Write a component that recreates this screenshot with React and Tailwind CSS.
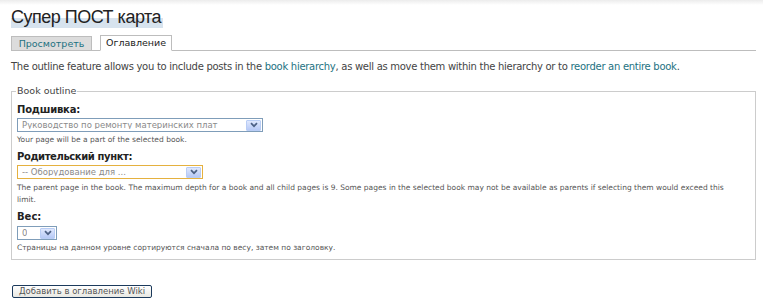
const font = { fontFamily: '"DejaVu Sans", Verdana, sans-serif' };

function Select({ width, value, focused }) {
  return (
    <div
      className={`flex h-[14px] items-center justify-between border bg-white pl-[4px] pr-[1px] ${
        focused ? "border-[#e5b13f]" : "border-[#7f9db9]"
      }`}
      style={{ width }}
    >
      <span className="truncate text-[8.5px] leading-none text-[#8a8a8a]">{value}</span>
      <span className="flex h-[11px] w-[15px] shrink-0 items-center justify-center rounded-[1px] border border-[#b9cdf5] bg-gradient-to-b from-[#dfe8fd] to-[#b7c9f6]">
        <svg width="8" height="6" viewBox="0 0 8 6">
          <path d="M1 1.2 L4 4.2 L7 1.2" fill="none" stroke="#4d6185" strokeWidth="1.7" />
        </svg>
      </span>
    </div>
  );
}

export default function App() {
  return (
    <div
      className="h-[308px] w-[763px] bg-gradient-to-b from-[#ececec] via-white to-white bg-[length:100%_10px] bg-no-repeat pl-[11px] pr-[7px] text-[#444]"
      style={font}
    >
      <div className="pt-[6px]">
        <h1
          className="inline-block bg-gradient-to-b from-transparent from-[55%] to-[#d7e3ee] to-[55%] pr-[2px] text-[18px] leading-[22px] tracking-[-0.5px] text-[#222]"
          style={{ fontFamily: '"Liberation Sans", Arial, sans-serif' }}
        >
          Супер ПОСТ карта
        </h1>
      </div>

      <div className="mt-[5px] flex items-end gap-[8px] border-b border-[#bdbdbd]">
        <span className="mb-[-1px] flex h-[15px] w-[81px] items-center justify-center border border-[#bdbdbd] bg-[#dcdcdc] pt-[1px] text-[9.5px] text-[#1d7282]">
          Просмотреть
        </span>
        <span className="mb-[-1px] flex h-[16px] w-[72px] items-center justify-center border border-b-white border-[#bdbdbd] bg-white pt-[1px] text-[9.5px] text-[#222]">
          Оглавление
        </span>
      </div>

      <p className="mt-[10px] text-[10px] leading-[12px] tracking-[-0.28px] text-[#444]">
        The outline feature allows you to include posts in the{" "}
        <span className="text-[#1d7282]">book hierarchy</span>, as well as move them within the
        hierarchy or to <span className="text-[#1d7282]">reorder an entire book</span>.
      </p>

      <fieldset className="mt-[13px] h-[174px] border border-[#cccccc] pl-[5px] pr-[6px]">
        <legend className="ml-[-1px] px-[1px] text-[9.5px] leading-[10px] text-[#444]">
          Book outline
        </legend>

        <div className="mt-[8px] text-[10px] font-bold leading-[12px] tracking-[-0.2px] text-[#222]">
          Подшивка:
        </div>
        <div className="mt-[2px]">
          <Select width={246} value="Руководство по ремонту материнских плат" />
        </div>
        <div className="mt-[2px] text-[7.5px] leading-[12px] text-[#555]">
          Your page will be a part of the selected book.
        </div>

        <div className="mt-[5px] text-[10px] font-bold leading-[12px] tracking-[-0.4px] text-[#222]">
          Родительский пункт:
        </div>
        <div className="mt-[2px]">
          <Select width={186} value="-- Оборудование для ..." focused />
        </div>
        <div className="mt-[3px] pr-[10px] text-[7.5px] leading-[12px] text-[#555]">
          The parent page in the book. The maximum depth for a book and all child pages is 9. Some
          pages in the selected book may not be available as parents if selecting them would exceed
          this limit.
        </div>

        <div className="mt-[5px] text-[10px] font-bold leading-[12px] text-[#222]">Вес:</div>
        <div className="mt-[3px]">
          <Select width={40} value="0" />
        </div>
        <div className="mt-[2px] text-[7.5px] leading-[12px] text-[#555]">
          Страницы на данном уровне сортируются сначала по весу, затем по заголовку.
        </div>
      </fieldset>

      <button className="ml-[1px] mt-[25px] flex h-[13px] w-[140px] items-center justify-center rounded-[2px] border border-[#1c3a5c] bg-gradient-to-b from-white to-[#e8e8e2] text-[8.5px] leading-none text-[#555]">
        Добавить в оглавление Wiki
      </button>
    </div>
  );
}
